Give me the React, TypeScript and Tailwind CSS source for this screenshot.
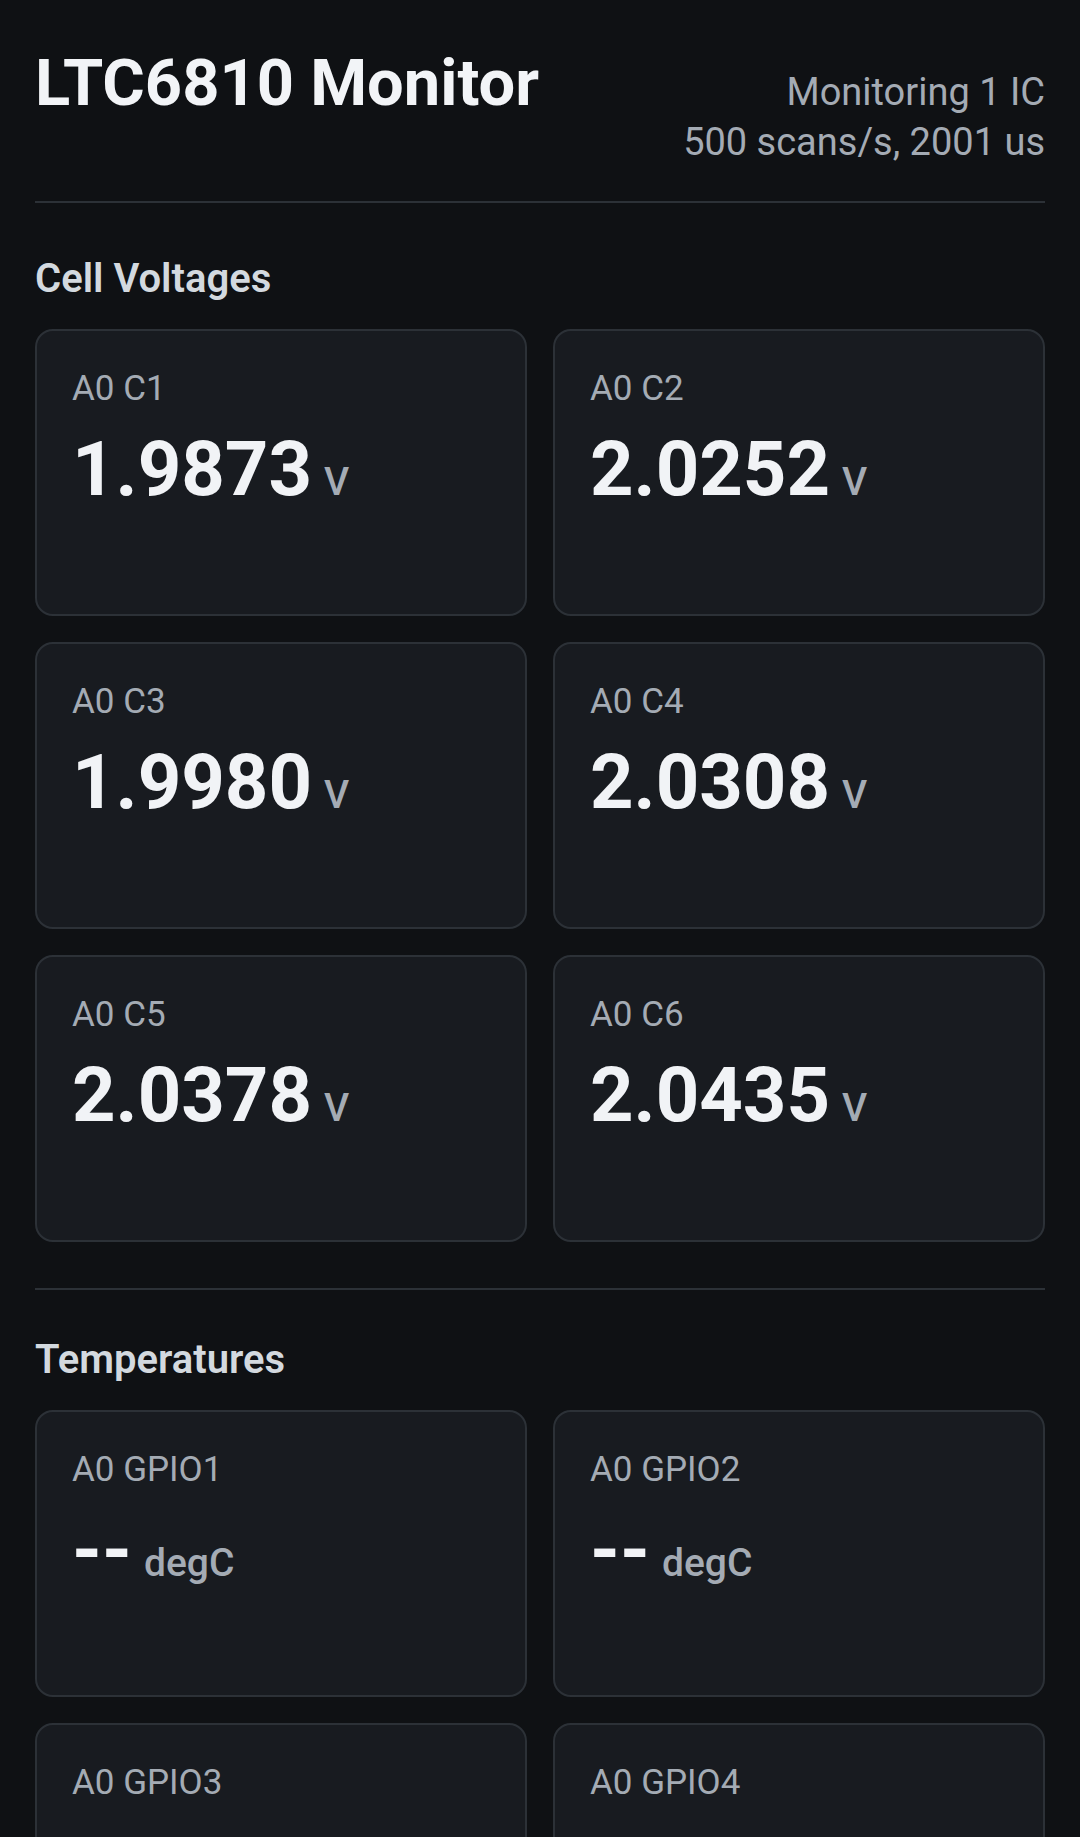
import React from "react";

type Reading = { label: string; value: string; unit: string };

const cells: Reading[] = [
  { label: "A0 C1", value: "1.9873", unit: "V" },
  { label: "A0 C2", value: "2.0252", unit: "V" },
  { label: "A0 C3", value: "1.9980", unit: "V" },
  { label: "A0 C4", value: "2.0308", unit: "V" },
  { label: "A0 C5", value: "2.0378", unit: "V" },
  { label: "A0 C6", value: "2.0435", unit: "V" },
];

const temps: Reading[] = [
  { label: "A0 GPIO1", value: "--", unit: "degC" },
  { label: "A0 GPIO2", value: "--", unit: "degC" },
  { label: "A0 GPIO3", value: "--", unit: "degC" },
  { label: "A0 GPIO4", value: "--", unit: "degC" },
];

function ReadingCard({ r }: { r: Reading }) {
  return (
    <div className="h-[287px] rounded-[18px] border-2 border-[#2c3137] bg-[#181b20] px-[35px] py-[35px]">
      <div className="text-[35px] leading-[46px] text-[#a4abb4]">{r.label}</div>
      <div className="mt-[12px] flex items-baseline">
        <span className="text-[76px] font-bold leading-[91px] text-[#f1f3f6]">
          {r.value}
        </span>
        <span className="ml-[12px] text-[39px] font-medium text-[#a4abb4]">
          {r.unit}
        </span>
      </div>
    </div>
  );
}

export default function App() {
  return (
    <div className="min-h-screen bg-[#0f1114] px-[35px] font-['Roboto','Liberation_Sans',sans-serif]">
      <header className="flex items-start justify-between border-b-2 border-[#2c3137] pb-[34px] pt-[45px]">
        <h1 className="text-[65px] font-bold leading-[77px] text-[#f2f4f7]">
          LTC6810 Monitor
        </h1>
        <div className="mt-[22px] text-right text-[38px] leading-[50px] text-[#a4abb4]">
          <div>Monitoring 1 IC</div>
          <div>500 scans/s, 2001 us</div>
        </div>
      </header>

      <section className="border-b-2 border-[#2c3137] pb-[46px] pt-[52px]">
        <h2 className="text-[40px] font-semibold leading-[48px] text-[#d3d9df]">
          Cell Voltages
        </h2>
        <div className="mt-[26px] grid grid-cols-2 gap-[26px]">
          {cells.map((r) => (
            <ReadingCard key={r.label} r={r} />
          ))}
        </div>
      </section>

      <section className="pb-[46px] pt-[46px]">
        <h2 className="text-[40px] font-semibold leading-[48px] text-[#d3d9df]">
          Temperatures
        </h2>
        <div className="mt-[26px] grid grid-cols-2 gap-[26px]">
          {temps.map((r) => (
            <ReadingCard key={r.label} r={r} />
          ))}
        </div>
      </section>
    </div>
  );
}
